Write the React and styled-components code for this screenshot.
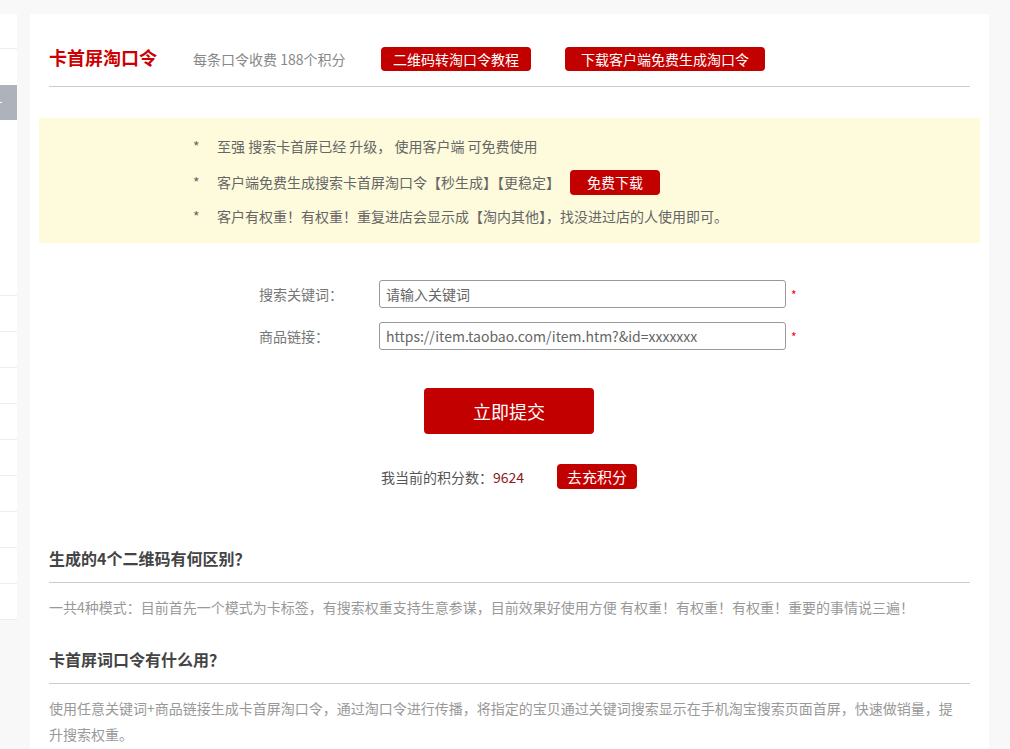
import React from "react";
import styled, { createGlobalStyle } from "styled-components";

const GlobalStyle = createGlobalStyle`
  html, body {
    margin: 0;
    padding: 0;
    background: #f8f8f8;
    font-family: "Noto Sans CJK SC", "Noto Sans", sans-serif;
    font-size: 14px;
    color: #666;
  }
  * { box-sizing: border-box; }
`;

const Page = styled.div`
  display: flex;
  align-items: flex-start;
  gap: 13px;
  padding-top: 14px;
  height: 749px;
  overflow: hidden;
`;

const Sidebar = styled.div`
  width: 17px;
  flex-shrink: 0;
  background: #fff;
  display: flex;
  flex-direction: column;
`;

const SideItem = styled.div`
  height: ${({ h }) => h || 36}px;
  border-bottom: ${({ line }) => (line ? "1px solid #eee" : "none")};
  background: ${({ active }) => (active ? "#aeb3bb" : "#fff")};
  position: relative;
  ${({ active }) =>
    active &&
    `&::after {
      content: "";
      position: absolute;
      left: 0;
      top: 17px;
      width: 2px;
      height: 1px;
      background: #fff;
    }`}
`;

const Card = styled.div`
  width: 959px;
  flex-shrink: 0;
  background: #fff;
  padding: 0 19px 40px;
  min-height: 760px;
`;

const Header = styled.div`
  display: flex;
  align-items: center;
  height: 73px;
  padding-top: 18px;
  border-bottom: 1px solid #ccc;
`;

const Title = styled.h2`
  margin: 0;
  font-size: 18px;
  font-weight: bold;
  color: #c00;
  width: 144px;
  position: relative;
  top: -2px;
`;

const Sub = styled.span`
  color: #888;
  font-size: 14px;
  width: 188px;
`;

const RedBtn = styled.button`
  border: none;
  background: #c30000;
  color: #fff;
  font-family: inherit;
  font-size: ${({ size }) => size || 14}px;
  height: ${({ h }) => h || 24}px;
  width: ${({ w }) => w}px;
  border-radius: 4px;
  padding: 0;
  margin-left: ${({ ml }) => ml || 0}px;
  line-height: 1;
  cursor: pointer;
`;

const Notice = styled.div`
  background: #fdfbdc;
  margin: 31px -10px 0;
  height: 125px;
  padding: 14px 0 0 154px;
`;

const NoticeRow = styled.div`
  display: flex;
  align-items: center;
  height: ${({ h }) => h || 33}px;
  color: #666;
`;

const Star = styled.span`
  width: 24px;
`;

const Form = styled.div`
  padding: 37px 0 0 210px;
  display: flex;
  flex-direction: column;
  gap: 14px;
`;

const FormRow = styled.div`
  display: flex;
  align-items: center;
`;

const Label = styled.label`
  width: 120px;
  color: #777;
`;

const Input = styled.input`
  width: 407px;
  height: 28px;
  border: 1px solid #999;
  border-radius: 3px;
  padding: 0 6px;
  font-family: inherit;
  font-size: 14px;
  color: #666;
  &::placeholder { color: #666; }
`;

const Req = styled.span`
  color: #f00;
  margin-left: 5px;
  font-size: 12px;
`;

const SubmitWrap = styled.div`
  display: flex;
  justify-content: center;
  padding: 38px 0 0 0;
  margin-left: -1px;
`;

const ScoreRow = styled.div`
  display: flex;
  align-items: center;
  padding: 30px 0 0 332px;
  color: #555;
`;

const Score = styled.span`
  color: #8b1a1a;
`;

const Section = styled.div`
  padding-top: ${({ pt }) => pt}px;
`;

const SecTitle = styled.h3`
  margin: 0;
  font-size: 16px;
  font-weight: bold;
  color: #444;
  height: 38px;
  line-height: 26px;
  border-bottom: 1px solid #ccc;
`;

const SecText = styled.p`
  margin: 0;
  padding: 11px 14px 0 0;
  color: #999;
  line-height: 26px;
`;

export default function App() {
  return (
    <>
      <GlobalStyle />
      <Page>
        <Sidebar>
          <SideItem h={35} line />
          <SideItem h={36} />
          <SideItem h={35} active />
          <SideItem h={176} line />
          {Array.from({ length: 9 }).map((_, i) => (
            <SideItem key={i} line />
          ))}
        </Sidebar>
        <Card>
          <Header>
            <Title>卡首屏淘口令</Title>
            <Sub>每条口令收费 188个积分</Sub>
            <RedBtn w={150}>二维码转淘口令教程</RedBtn>
            <RedBtn w={200} ml={34}>下载客户端免费生成淘口令</RedBtn>
          </Header>
          <Notice>
            <NoticeRow h={28}>
              <Star>*</Star>至强 搜索卡首屏已经 升级， 使用客户端 可免费使用
            </NoticeRow>
            <NoticeRow h={44}>
              <Star>*</Star>客户端免费生成搜索卡首屏淘口令【秒生成】【更稳定】
              <RedBtn w={90} h={25} ml={10}>免费下载</RedBtn>
            </NoticeRow>
            <NoticeRow h={24}>
              <Star>*</Star>客户有权重！有权重！重复进店会显示成【淘内其他】，找没进过店的人使用即可。
            </NoticeRow>
          </Notice>
          <Form>
            <FormRow>
              <Label>搜索关键词：</Label>
              <Input placeholder="请输入关键词" />
              <Req>*</Req>
            </FormRow>
            <FormRow>
              <Label>商品链接：</Label>
              <Input placeholder="https://item.taobao.com/item.htm?&id=xxxxxxx" />
              <Req>*</Req>
            </FormRow>
          </Form>
          <SubmitWrap>
            <RedBtn w={170} h={46} size={18}>立即提交</RedBtn>
          </SubmitWrap>
          <ScoreRow>
            我当前的积分数：<Score>9624</Score>
            <RedBtn w={80} h={25} ml={33} size={15}>去充积分</RedBtn>
          </ScoreRow>
          <Section pt={56}>
            <SecTitle>生成的4个二维码有何区别？</SecTitle>
            <SecText>一共4种模式：目前首先一个模式为卡标签，有搜索权重支持生意参谋，目前效果好使用方便 有权重！有权重！有权重！重要的事情说三遍！</SecText>
          </Section>
          <Section pt={26}>
            <SecTitle>卡首屏词口令有什么用？</SecTitle>
            <SecText>使用任意关键词+商品链接生成卡首屏淘口令，通过淘口令进行传播，将指定的宝贝通过关键词搜索显示在手机淘宝搜索页面首屏，快速做销量，提升搜索权重。</SecText>
          </Section>
        </Card>
      </Page>
    </>
  );
}
